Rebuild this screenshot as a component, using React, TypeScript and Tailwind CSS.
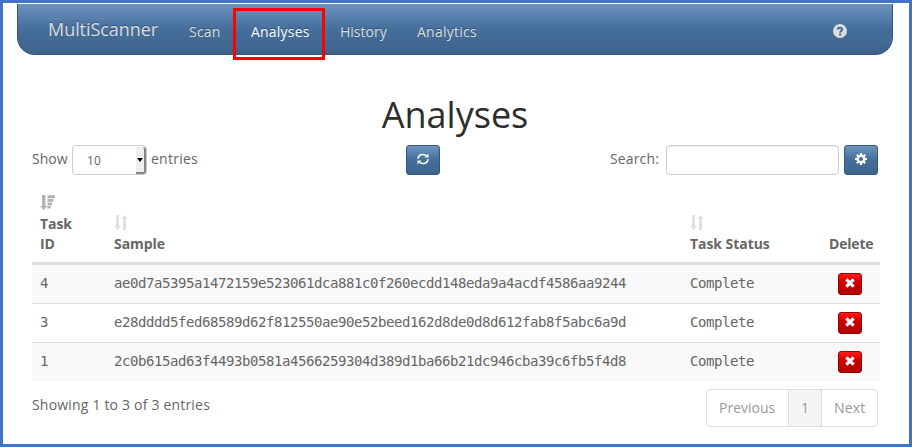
import React from "react";

const rows = [
  { id: 4, sample: "ae0d7a5395a1472159e523061dca881c0f260ecdd148eda9a4acdf4586aa9244" },
  { id: 3, sample: "e28dddd5fed68589d62f812550ae90e52beed162d8de0d8d612fab8f5abc6a9d" },
  { id: 1, sample: "2c0b615ad63f4493b0581a4566259304d389d1ba66b21dc946cba39c6fb5f4d8" },
];

function SortIcon() {
  return (
    <svg className="block h-[15px] w-[14px]" viewBox="0 0 14 15" fill="#e0e0e0">
      <path d="M2 0h3v11h2L3.500 15 0 11h2z" />
      <path d="M9 15h3V4h2L10.500 0 7 4h2z" />
    </svg>
  );
}

function SortDescIcon() {
  return (
    <svg className="block h-[15px] w-[15px]" viewBox="0 0 15 15" fill="#b3b3b3">
      <path d="M2 0h3.500v11h2L3.700 15 0 11h2z" />
      <path d="M7.500 0.300h7.300v3h-7.300zM7.500 3.900h5.900v2.900H7.500zM7.500 7.400h4.600v2.800H7.500zM7.500 10.800h3.300v2.700H7.500z" />
    </svg>
  );
}

function RefreshIcon() {
  return (
    <svg className="h-3 w-3" viewBox="0 0 12 12" fill="none" stroke="#fff" strokeWidth="1.500">
      <path d="M1 5.800C1.200 1.800 6 0.200 9.200 2.600" />
      <path d="M11 6.200C10.800 10.200 6 11.800 2.800 9.400" />
      <path d="M11.500 0.500v4H7.500zM0.500 11.500v-4h4z" fill="#fff" stroke="none" />
    </svg>
  );
}

function CogIcon() {
  return (
    <svg className="h-3 w-3" viewBox="0 0 12 12">
      <g fill="#fff">
        <rect x="4.900" width="2.200" height="12" />
        <rect x="4.900" width="2.200" height="12" transform="rotate(45 6 6)" />
        <rect x="4.900" width="2.200" height="12" transform="rotate(90 6 6)" />
        <rect x="4.900" width="2.200" height="12" transform="rotate(135 6 6)" />
        <circle cx="6" cy="6" r="4.300" />
      </g>
      <circle cx="6" cy="6" r="2.100" fill="#456f9b" />
    </svg>
  );
}

function RemoveIcon() {
  return (
    <svg className="h-[10px] w-[10px]" viewBox="0 0 11 11" stroke="#fff" strokeWidth="3.400">
      <path d="M1.500 1.500l8 8M9.500 1.500l-8 8" />
    </svg>
  );
}

function HelpIcon() {
  return (
    <svg className="h-[14px] w-[14px]" viewBox="0 0 14 14">
      <circle cx="7" cy="7" r="7" fill="#ddd" />
      <path d="M4.700 5.600C4.700 3.100 9.200 3.100 9.200 5.300 9.200 7 7.200 6.800 7.200 8.700" fill="none" stroke="#456f9b" strokeWidth="2" />
      <rect x="6.100" y="9.600" width="2.100" height="2" fill="#456f9b" />
    </svg>
  );
}

function BlueButton({ children }: { children: React.ReactNode }) {
  return (
    <button className="flex h-[30px] w-[34px] shrink-0 items-center justify-center rounded-[3px] border border-[#345578] bg-[linear-gradient(#6d94bf,#446e9b_50%,#3e648d)] pb-[2px]">
      {children}
    </button>
  );
}

export default function App() {
  const cols = "grid grid-cols-[74px_576px_139px_59px]";
  return (
    <div className="h-[447px] w-[912px] overflow-hidden border-[3px] border-[#4472c4] bg-white pt-px font-['Open_Sans',sans-serif] text-[14px] leading-5 text-[#666]">
      <nav className="ml-[14px] flex h-[51px] w-[876px] rounded-b-[18px] border border-t-0 border-[#345578] bg-[linear-gradient(#6d94bf,#446e9b_50%,#3e648d)] text-[#ddd] [text-shadow:0_-1px_0_rgba(0,0,0,0.3)]">
        <div className="ml-[30px] mt-[15px] w-[126px] text-[18px] tracking-[-0.05px]">MultiScanner</div>
        <div className="mt-[18px] ml-[15px] w-[44px] tracking-[0.2px]">Scan</div>
        <div className="mt-[4px] h-[52px] w-[92px] shrink-0 border-[3px] border-[#f00] pt-[11px] pl-[15px] tracking-[0.2px] text-white">Analyses</div>
        <div className="mt-[18px] ml-[15px] w-[77px]">History</div>
        <div className="mt-[18px] tracking-[0.25px]">Analytics</div>
        <div className="mt-5 mr-[45px] ml-auto"><HelpIcon /></div>
      </nav>
      <main className="ml-[29px] w-[848px]">
        <h1 className="mt-[40px] h-[40px] pr-[2px] text-center text-[36px] leading-[40px] text-[#2d2d2d]">Analyses</h1>
        <div className="mt-[10px] flex h-[30px] items-center pr-[2px]">
          <span className="w-[40px] pb-[3px]">Show</span>
          <div className="flex h-[30px] w-[75px] items-center justify-between rounded-[4px] border border-[#ccc] pl-[14px] text-[12px]">
            <span className="pt-px tracking-[0.2px]">10</span>
            <span className="mt-px flex h-[27px] w-[10px] items-center justify-center rounded-r-[3px] border-r-2 border-b-2 border-[#858585] bg-[#eee]">
              <svg className="h-[4px] w-[6px] shrink-0" viewBox="0 0 6 4"><path d="M0 0h6L3 4z" fill="#000" /></svg>
            </span>
          </div>
          <span className="ml-[4px] w-[255px] pb-[3px] tracking-[0.25px]">entries</span>
          <BlueButton><RefreshIcon /></BlueButton>
          <span className="ml-auto pr-[7px] pb-[3px] tracking-[0.15px]">Search:</span>
          <input className="h-[30px] w-[173px] rounded-[4px] border border-[#ccc] shadow-[inset_0_1px_1px_rgba(0,0,0,0.075)] mr-[5px]" />
          <BlueButton><CogIcon /></BlueButton>
        </div>
        <div className={`${cols} h-[90px] items-end border-b-[3px] border-[#ddd] pb-[8px] font-bold tracking-[-0.05px]`}>
          <div className="pl-2"><SortDescIcon /><div className="mt-[4px]">Task<br />ID</div></div>
          <div className="pl-2"><SortIcon /><div className="mt-[4px]">Sample</div></div>
          <div className="pl-2"><SortIcon /><div className="mt-[4px]">Task Status</div></div>
          <div className="pl-2 tracking-[-0.2px]">Delete</div>
        </div>
        <div>
          {rows.map((row) => (
            <div key={row.id} className={`${cols} h-[39px] items-center border-b border-[#ddd] font-['DejaVu_Sans_Mono',monospace] text-[14px] tracking-[-0.429px] odd:bg-[#f9f9f9] last:h-[38px] last:border-b-0`}>
              <div className="pb-[2px] pl-2">{row.id}</div>
              <div className="pb-[2px] pl-2">{row.sample}</div>
              <div className="pb-[2px] pl-2">Complete</div>
              <div className="pl-[17px]">
                <button className="flex h-[22px] w-6 items-center justify-center rounded-[3px] border border-[#900] bg-[linear-gradient(#ff1a1a,#cd0200_40%,#b30000)] pb-[2px]">
                  <RemoveIcon />
                </button>
              </div>
            </div>
          ))}
        </div>
        <div className="flex justify-between pr-[2px]">
          <span className="mt-[14px] tracking-[0.19px]">Showing 1 to 3 of 3 entries</span>
          <div className="mt-[8px] flex h-[38px] w-[172px] rounded-[4px] border border-[#ddd] leading-9 text-[#999]">
            <span className="w-[81px] pl-[12px]">Previous</span>
            <span className="w-[34px] border-x border-[#ddd] bg-[#f5f5f5] text-center">1</span>
            <span className="pl-[12px] tracking-[0.15px]">Next</span>
          </div>
        </div>
      </main>
    </div>
  );
}
